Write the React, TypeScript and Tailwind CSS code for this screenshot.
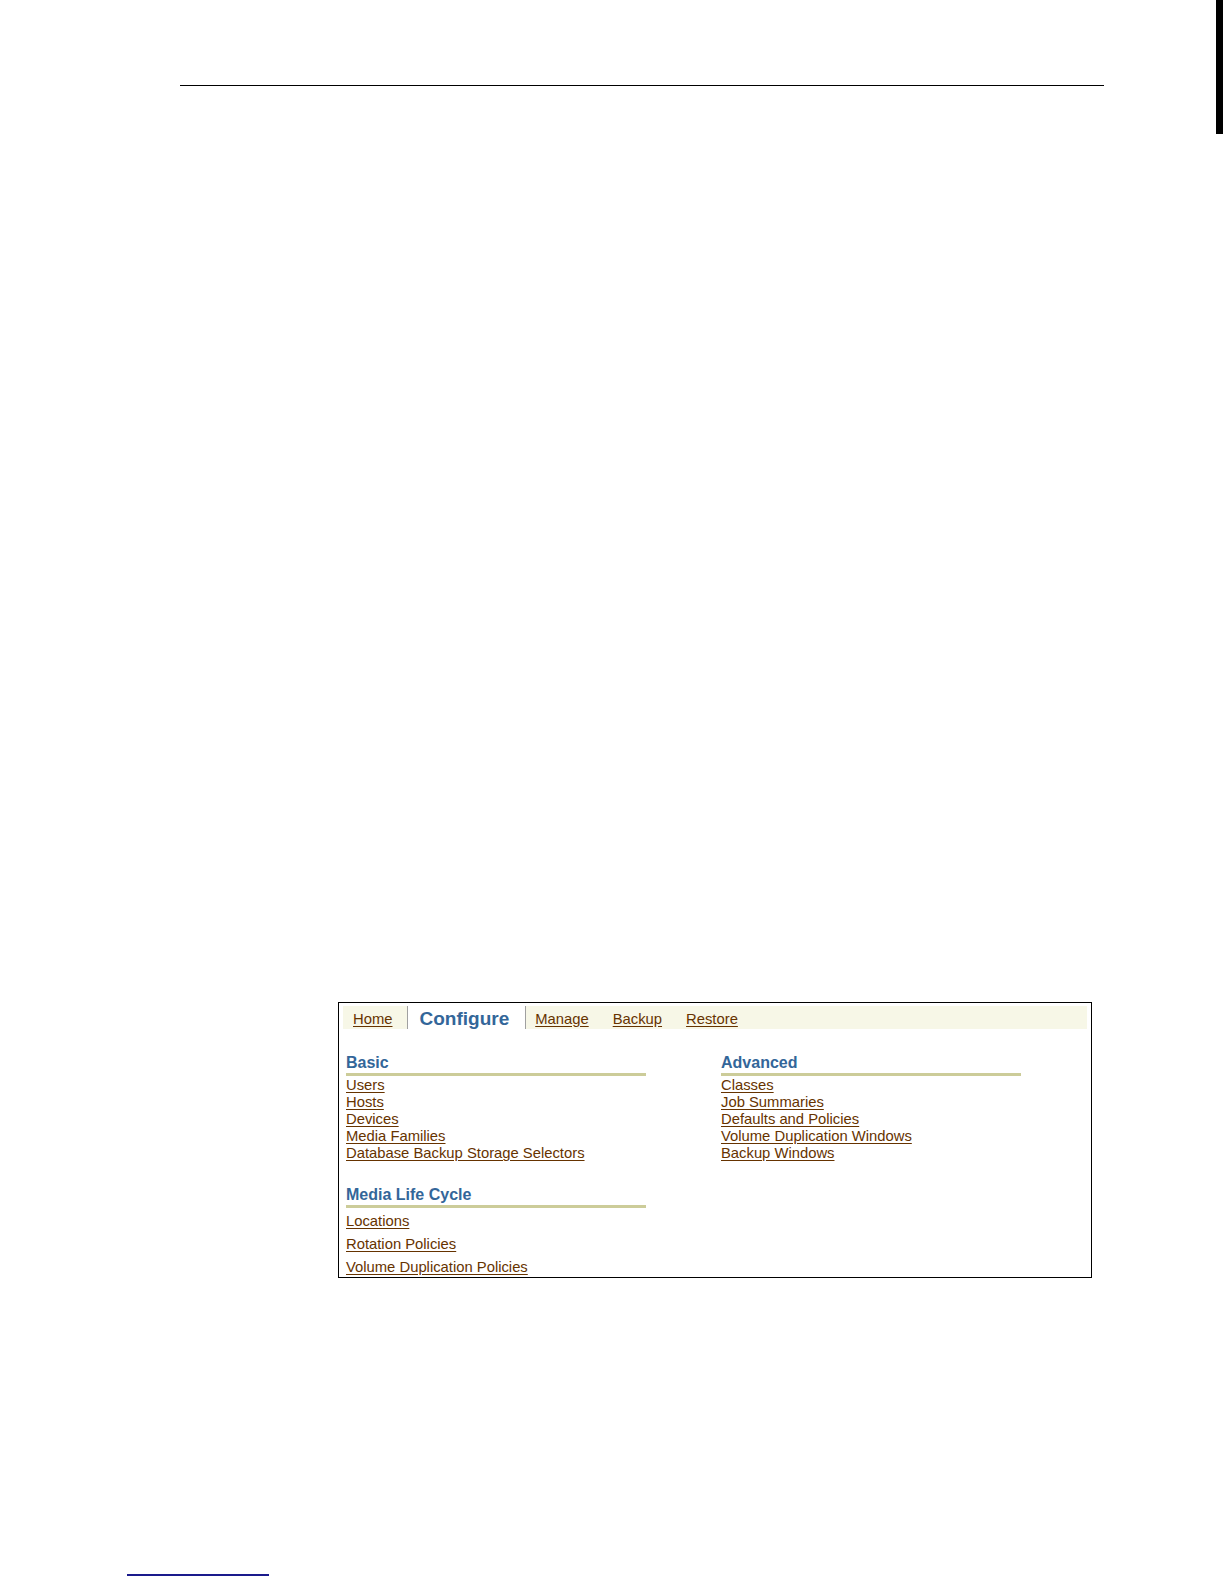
import React from "react";

const basicLinks = [
  "Users",
  "Hosts",
  "Devices",
  "Media Families",
  "Database Backup Storage Selectors",
];

const advancedLinks = [
  "Classes",
  "Job Summaries",
  "Defaults and Policies",
  "Volume Duplication Windows",
  "Backup Windows",
];

const lifeCycleLinks = ["Locations", "Rotation Policies", "Volume Duplication Policies"];

function NavLink({ children }: { children: React.ReactNode }) {
  return (
    <a href="#" className="text-[#663300] underline decoration-[#663300] underline-offset-[2px]">
      {children}
    </a>
  );
}

function Heading({ children }: { children: React.ReactNode }) {
  return (
    <div className="w-[300px]">
      <div className="text-[16px] font-bold leading-[18px] text-[#336699]">{children}</div>
      <div className="mt-px h-[3px] bg-[#cccc99]" />
    </div>
  );
}

export default function App() {
  return (
    <div
      className="relative h-[1584px] w-[1224px] overflow-hidden bg-white"
      style={{ fontFamily: '"Liberation Sans", Arial, sans-serif' }}
    >
      {/* page edge marker */}
      <div className="absolute right-[1px] top-0 h-[134px] w-[7px] bg-black" />

      {/* header rule */}
      <div className="ml-[180px] pt-[85px]">
        <div className="h-px w-[924px] bg-black" />
      </div>

      {/* screenshot box */}
      <div className="ml-[338px] mt-[916px] w-[754px] border border-black px-[4px] pb-[1px] pt-[3px] text-[14.8px] leading-[17.5px]">
        <div className="flex h-[23px] items-stretch bg-[#f7f7e7]">
          <div className="flex items-center pl-[10px] pr-[15px] pt-[4px]">
            <NavLink>Home</NavLink>
          </div>
          <div className="w-px bg-[#a0a0a0]" />
          <div className="flex items-center bg-white pl-[11px] pr-[16px] pt-[2px]">
            <span className="text-[19px] font-bold leading-[21px] text-[#336699]">Configure</span>
          </div>
          <div className="w-px bg-[#a0a0a0]" />
          <div className="flex items-center gap-[24px] pl-[9px] pt-[4px]">
            <NavLink>Manage</NavLink>
            <NavLink>Backup</NavLink>
            <NavLink>Restore</NavLink>
          </div>
        </div>

        <div className="mt-[25px] pl-[3px]">
          <div className="flex">
            <div className="w-[375px]">
              <Heading>Basic</Heading>
              <ul className="mt-px leading-[17px]">
                {basicLinks.map((l) => (
                  <li key={l}>
                    <NavLink>{l}</NavLink>
                  </li>
                ))}
              </ul>
            </div>
            <div>
              <Heading>Advanced</Heading>
              <ul className="mt-px leading-[17px]">
                {advancedLinks.map((l) => (
                  <li key={l}>
                    <NavLink>{l}</NavLink>
                  </li>
                ))}
              </ul>
            </div>
          </div>

          <div className="mt-[24px]">
            <Heading>Media Life Cycle</Heading>
            <ul className="mt-[4.5px] flex flex-col gap-[5.5px]">
              {lifeCycleLinks.map((l) => (
                <li key={l}>
                  <NavLink>{l}</NavLink>
                </li>
              ))}
            </ul>
          </div>
        </div>
      </div>

      {/* footnote rule */}
      <div className="absolute left-[127px] top-[1574px] h-[2px] w-[142px] bg-[#1a1a8c]" />
    </div>
  );
}
